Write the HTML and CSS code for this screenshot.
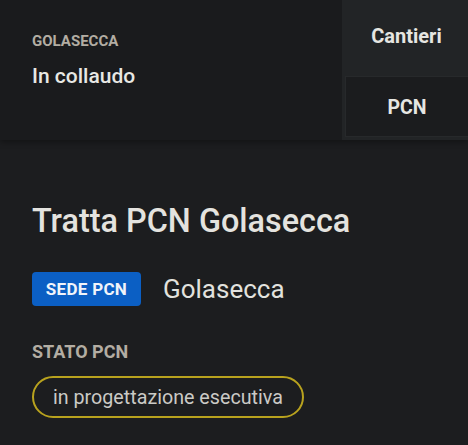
FILE: index.html
```html
<!DOCTYPE html>
<html lang="it">
<head>
<meta charset="utf-8">
<link rel="stylesheet" href="styles.css">
</head>
<body>
<header class="top">
  <div class="place">
    <div class="place-label">GOLASECCA</div>
    <div class="place-status">In collaudo</div>
  </div>
  <nav class="tabs">
    <div class="tab">Cantieri</div>
    <div class="tab tab-active">PCN</div>
  </nav>
</header>
<main class="content">
  <h1 class="title">Tratta PCN Golasecca</h1>
  <div class="sede">
    <span class="badge">SEDE PCN</span>
    <span class="sede-name">Golasecca</span>
  </div>
  <div class="stato-label">STATO PCN</div>
  <div class="pill-row"><span class="pill">in progettazione esecutiva</span></div>
</main>
</body>
</html>
```
FILE: styles.css
```css
html, body {
  margin: 0;
  padding: 0;
  background: #1b1c1e;
  font-family: Roboto, "Noto Sans", sans-serif;
  height: 100%;
  overflow: hidden;
}
.top {
  display: flex;
  height: 140px;
  background: #1a1b1d;
  box-shadow: 0 2px 6px rgba(0,0,0,0.35);
  position: relative;
  z-index: 1;
}
.place {
  flex: 1;
  padding: 32px 0 0 32px;
}
.place-label {
  font-size: 15px;
  font-weight: 700;
  color: #b3ada3;
  line-height: 18px;
}
.place-status {
  font-size: 21px;
  font-weight: 500;
  color: #e8e8e4;
  line-height: 26px;
  margin-top: 13px;
}
.tabs {
  width: 126px;
  background: #222426;
  display: flex;
  flex-direction: column;
  padding: 0 0 3px 3px;
  box-sizing: border-box;
}
.tab {
  height: 76px;
  display: flex;
  align-items: center;
  justify-content: center;
  font-size: 20px;
  font-weight: 700;
  color: #e6e6e2;
  box-sizing: border-box;
  padding-bottom: 4px;
}
.tab-active {
  flex: 1;
  height: auto;
  padding-bottom: 0;
  padding-top: 2px;
  font-size: 19.5px;
  background: #1b1c1e;
  border: 1px solid #27292b;
  border-right: none;
}
.content {
  padding: 62px 32px 0 32px;
  background: #1c1d1f;
  height: 305px;
  box-sizing: border-box;
}
.title {
  margin: 0;
  font-size: 32.4px;
  font-weight: 500;
  color: #e4e3df;
  line-height: 38px;
}
.sede {
  display: flex;
  align-items: center;
  gap: 22px;
  margin-top: 32px;
  height: 34px;
}
.badge {
  background: #0b5fc4;
  color: #f0f4fa;
  font-size: 17px;
  font-weight: 700;
  letter-spacing: 0.3px;
  border-radius: 4px;
  height: 34px;
  width: 109px;
  display: flex;
  align-items: center;
  justify-content: center;
  box-sizing: border-box;
}
.sede-name {
  font-size: 26px;
  color: #e2e2de;
}
.stato-label {
  margin-top: 35px;
  font-size: 18px;
  font-weight: 700;
  color: #b3ada3;
  line-height: 22px;
}
.pill-row {
  margin-top: 13px;
  display: flex;
}
.pill {
  border: 2px solid #b8a21e;
  border-radius: 21px;
  height: 42px;
  box-sizing: border-box;
  padding: 0 19px;
  display: flex;
  align-items: center;
  font-size: 19.7px;
  color: #cbcac6;
}
```
